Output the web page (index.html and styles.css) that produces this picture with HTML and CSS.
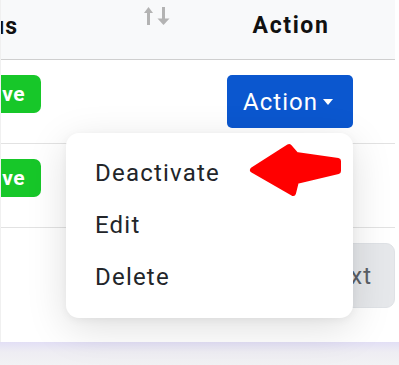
FILE: index.html
```html
<!DOCTYPE html>
<html>
<head>
<meta charset="utf-8">
<link rel="stylesheet" href="styles.css">
</head>
<body>
<div class="page">
  <div class="table">
    <div class="row head">
      <div class="c-status"><span class="clip">Status</span></div>
      <div class="c-mid">
        <svg class="sort" width="27" height="20" viewBox="0 0 27 20">
          <path d="M4.5 3 V19" stroke="#b3b3b3" stroke-width="3" fill="none"/>
          <path d="M0 7 L4.5 1 L9 7 Z" fill="#b3b3b3"/>
          <path d="M19.5 1 V16" stroke="#b3b3b3" stroke-width="3" fill="none"/>
          <path d="M13.5 12.5 L19.5 19 L25.5 12.5 Z" fill="#b3b3b3"/>
        </svg>
      </div>
      <div class="c-action"><span class="h-action">Action</span></div>
    </div>
    <div class="row body">
      <div class="c-status"><span class="badge">Active</span></div>
      <div class="c-mid"></div>
      <div class="c-action"><button class="btn">Action<span class="caret"></span></button></div>
    </div>
    <div class="row body">
      <div class="c-status"><span class="badge">Active</span></div>
      <div class="c-mid"></div>
      <div class="c-action"></div>
    </div>
    <div class="pager">
      <button class="next">Next</button>
    </div>
  </div>
  <div class="footer"></div>

  <div class="menu">
    <div class="item">Deactivate</div>
    <div class="item">Edit</div>
    <div class="item">Delete</div>
  </div>
  <svg class="pointer" width="100" height="60" viewBox="0 0 100 60">
    <path d="M7 27 L43 4 L50 12 L92 18 L92 28 L50 38 L47 50 Z" fill="#ff0000" stroke="#ff0000" stroke-width="6" stroke-linejoin="round"/>
  </svg>
</div>
</body>
</html>
```

FILE: styles.css
```css
html, body {
  margin: 0;
  padding: 0;
  background: #ffffff;
  overflow: hidden;
}
.page {
  position: relative;
  width: 399px;
  height: 365px;
  font-family: Roboto, "Liberation Sans", sans-serif;
  color: #212529;
}
.table {
  width: 394px;
  border-left: 1px solid #f0f0f0;
}
.row {
  display: flex;
}
.head {
  height: 59px;
  background: #f8f9fa;
  border-bottom: 1px solid #cfcfcf;
}
.body {
  height: 83px;
  border-bottom: 1px solid #e2e2e2;
}
.c-status {
  width: 40px;
  display: flex;
  justify-content: flex-end;
  overflow: hidden;
}
.head .c-status {
  width: 17px;
  margin-right: 23px;
  padding-top: 12px;
  align-items: flex-start;
}
.clip {
  font-weight: 700;
  font-size: 23px;
  line-height: 30px;
  letter-spacing: 1px;
  white-space: nowrap;
  color: #111;
}
.c-mid {
  width: 146px;
}
.sort {
  display: block;
  margin-left: 103px;
  margin-top: 6px;
}
.c-action {
  flex: 1;
  display: flex;
  justify-content: center;
  align-items: flex-start;
}
.h-action {
  font-weight: 700;
  font-size: 23px;
  line-height: 30px;
  letter-spacing: 1.6px;
  padding-top: 11px;
  color: #111;
}
.body .c-status {
  align-items: flex-start;
  padding-top: 15px;
}
.badge {
  display: inline-block;
  background: #17c729;
  color: #fff;
  font-weight: 700;
  font-size: 21px;
  line-height: 38px;
  height: 38px;
  padding: 0 16px 0 14px;
  border-radius: 7px;
  white-space: nowrap;
  letter-spacing: 0.5px;
}
.body .c-action {
  padding-top: 15px;
}
.btn {
  display: flex;
  align-items: center;
  height: 53px;
  padding: 0 20px 0 16px;
  border: none;
  border-radius: 5px;
  background: #0b57cf;
  color: #fff;
  font-family: Roboto, "Liberation Sans", sans-serif;
  font-size: 24px;
  letter-spacing: 1px;
  margin-right: 2px;
}
.caret {
  display: inline-block;
  width: 0;
  height: 0;
  margin-left: 5px;
  border-left: 5.5px solid transparent;
  border-right: 5.5px solid transparent;
  border-top: 6px solid #fff;
}
.pager {
  height: 114px;
  display: flex;
  justify-content: flex-end;
  align-items: flex-start;
  padding-top: 15px;
  box-sizing: border-box;
}
.next {
  height: 65px;
  padding: 0 22px 0 24px;
  border: 1px solid #dfe2e6;
  border-radius: 9px;
  background: #e6e8eb;
  color: #5b6067;
  font-family: Roboto, "Liberation Sans", sans-serif;
  font-size: 24px;
  letter-spacing: 1px;
}
.footer {
  height: 23px;
  background: linear-gradient(#e2dff5, #eeedf3 10px, #f2f2f4);
}
.menu {
  position: absolute;
  left: 66px;
  top: 133px;
  width: 287px;
  height: 185px;
  box-sizing: border-box;
  padding-top: 14px;
  background: #fff;
  border-radius: 13px;
  box-shadow: 0 10px 40px rgba(0,0,0,0.13), 0 2px 8px rgba(0,0,0,0.05);
}
.item {
  padding-left: 29px;
  font-size: 24px;
  line-height: 52px;
  letter-spacing: 1.2px;
  color: #222529;
}
.pointer {
  position: absolute;
  left: 246px;
  top: 143px;
}
```
